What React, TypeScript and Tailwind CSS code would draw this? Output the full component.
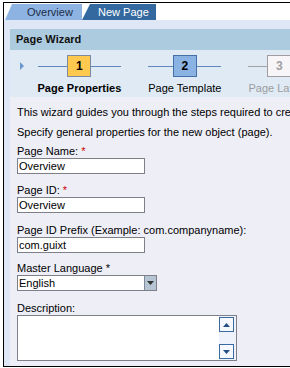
import React from 'react';

type Step = { n: number; label: string; state: 'done' | 'current' | 'todo' };

const steps: Step[] = [
  { n: 1, label: 'Page Properties', state: 'current' },
  { n: 2, label: 'Page Template', state: 'done' },
  { n: 3, label: 'Page Layout', state: 'todo' },
];

function StepCell({ step }: { step: Step }) {
  const line = step.state === 'todo' ? 'bg-[#a3a3a8]' : 'bg-[#5f88bd]';
  const box =
    step.state === 'current'
      ? 'bg-[#ffc84f] border-[#7d8aa0] text-black'
      : step.state === 'done'
        ? 'bg-[#8ab2e2] border-[#4470a6] text-black'
        : 'bg-[#f8f5f8] border-[#a09ca0] text-[#a0a0a0]';
  const label =
    step.state === 'current' ? 'font-bold text-black' : step.state === 'done' ? 'text-black' : 'text-[#9c9c9c]';
  return (
    <div className="flex flex-col items-center px-[13.5px] shrink-0">
      <div className="flex items-center self-stretch h-[22px]">
        <div className={`flex-1 h-px ${line}`} />
        <div className={`w-[24px] h-[22px] border flex items-center justify-center text-[12px] font-bold ${box}`}>
          {step.n}
        </div>
        <div className={`flex-1 h-px ${line}`} />
      </div>
      <div className={`mt-[4px] leading-[14px] whitespace-nowrap ${label}`}>{step.label}</div>
    </div>
  );
}

function Label({ text, star }: { text: string; star?: 'red' | 'black' }) {
  return (
    <div className="leading-[14px] whitespace-nowrap">
      {text}
      {star === 'red' && <span className="text-[#cc0000]"> *</span>}
      {star === 'black' && <span> *</span>}
    </div>
  );
}

function TextField({ value }: { value: string }) {
  return (
    <input
      readOnly
      defaultValue={value}
      className="block w-[128px] h-[16px] border border-[#7f7f8a] bg-white px-px text-[11px] leading-[14px] outline-none"
    />
  );
}

function ScrollBtn({ up }: { up?: boolean }) {
  return (
    <div className="w-[15px] h-[15px] border border-[#3a6aa1] bg-[#f5f8fd] flex items-center justify-center">
      <svg width="7" height="4" viewBox="0 0 7 4">
        <path d={up ? 'M0 4 L3.5 0 L7 4 Z' : 'M0 0 L3.5 4 L7 0 Z'} fill="#234f83" />
      </svg>
    </div>
  );
}

export default function App() {
  return (
    <div className="w-[290px] h-[368px] overflow-hidden bg-white pl-[3px] pt-[2px] flex text-[11px] text-black font-['Liberation_Sans',Arial,sans-serif]">
      <div className="flex-1 min-w-0 h-[365px] border-l border-t border-b border-black flex flex-col bg-[#dfe6f6]">
        {/* tab strip */}
        <div className="h-[17px] shrink-0 bg-white flex items-end pl-px">
          <div className="w-[77px] h-[16px] bg-[#8db3e2] text-[#1c2d47] pl-[22px] leading-[16px] whitespace-nowrap [clip-path:polygon(7px_0,100%_0,100%_100%,0_100%)]">
            Overview
          </div>
          <div className="w-[74px] h-[16px] bg-[#33699e] text-white pl-[16px] leading-[16px] whitespace-nowrap [clip-path:polygon(8px_0,100%_0,100%_100%,0_100%)]">
            New Page
          </div>
        </div>

        <div className="flex-1 min-h-0 pt-[9px] pl-[6px] flex flex-col">
          <div className="flex-1 min-h-0 flex flex-col bg-[#eeeef7] overflow-hidden">
            {/* header */}
            <div className="h-[21px] shrink-0 bg-[#adcbdf] flex items-center pl-[6px] font-bold text-[#111]">
              Page Wizard
            </div>

            {/* wizard steps */}
            <div className="h-[47px] shrink-0 bg-[#dfeaf5] pt-[5px] pl-[10px] flex items-start overflow-hidden">
              <div className="h-[22px] w-[4px] shrink-0 flex items-center">
                <svg width="4" height="8" viewBox="0 0 4 8">
                  <path d="M0 0 L4 4 L0 8 Z" fill="#6b97cf" />
                </svg>
              </div>
              {steps.map((s) => (
                <StepCell key={s.n} step={s} />
              ))}
            </div>

            {/* form */}
            <div className="pl-[7px] pt-[8px] whitespace-nowrap">
              <div className="leading-[14px]">This wizard guides you through the steps required to create a new page.</div>
              <div className="leading-[14px] mt-[6px]">Specify general properties for the new object (page).</div>

              <div className="mt-[5px]">
                <Label text="Page Name:" star="red" />
                <TextField value="Overview" />
              </div>

              <div className="mt-[9px]">
                <Label text="Page ID:" star="red" />
                <TextField value="Overview" />
              </div>

              <div className="mt-[10px]">
                <Label text="Page ID Prefix (Example: com.companyname):" />
                <TextField value="com.guixt" />
              </div>

              <div className="mt-[8px]">
                <Label text="Master Language" star="black" />
                <div className="w-[140px] h-[16px] border border-[#7f7f8a] bg-white flex">
                  <div className="flex-1 pl-px leading-[14px]">English</div>
                  <div className="w-[12px] border-l border-[#7f8a96] bg-[#b6c5d3] flex items-center justify-center">
                    <svg width="7" height="4" viewBox="0 0 7 4">
                      <path d="M0 0 L3.5 4 L7 0 Z" fill="#333" />
                    </svg>
                  </div>
                </div>
              </div>

              <div className="mt-[10px]">
                <Label text="Description:" />
                <div className="w-[220px] h-[46px] border border-[#7f7f8a] bg-white flex">
                  <textarea readOnly className="flex-1 min-w-0 resize-none outline-none bg-white" />
                  <div className="w-[17px] bg-[#eef3fb] flex flex-col justify-between items-start py-px">
                    <ScrollBtn up />
                    <ScrollBtn />
                  </div>
                </div>
              </div>
            </div>
          </div>
        </div>
      </div>
    </div>
  );
}
